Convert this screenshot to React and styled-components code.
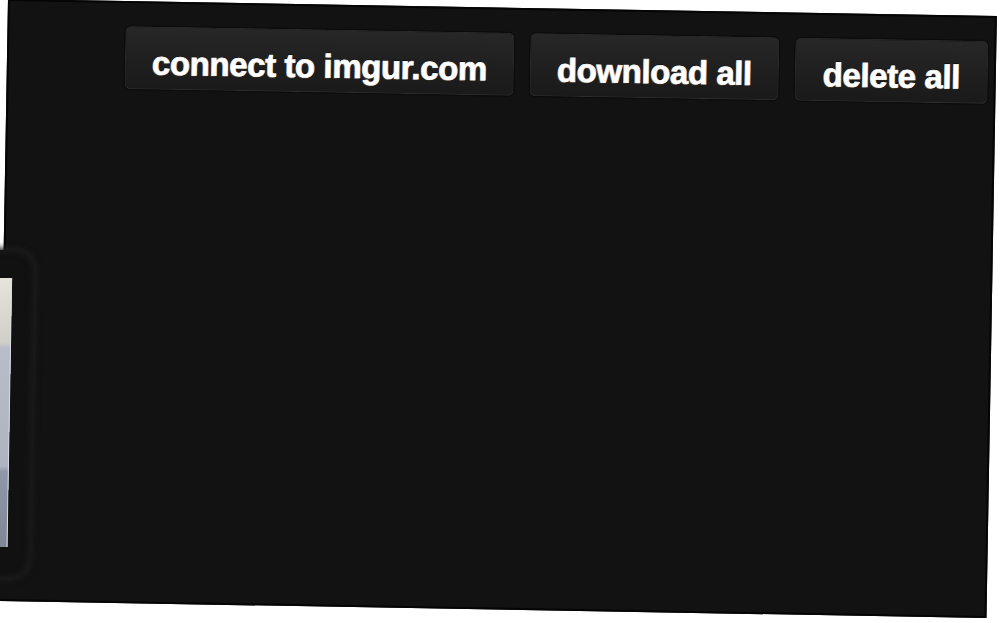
import React from 'react';
import styled, { createGlobalStyle } from 'styled-components';

const Global = createGlobalStyle`
  html, body {
    margin: 0;
    padding: 0;
    background: #ffffff;
    overflow: hidden;
  }
  body {
    width: 1000px;
    height: 623px;
    font-family: "Liberation Sans", Arial, Helvetica, sans-serif;
  }
`;

const Stage = styled.div`
  width: 1000px;
  height: 623px;
  padding: 0 0 0 8px;
  box-sizing: border-box;
`;

const Panel = styled.div`
  width: 989px;
  height: 602px;
  margin-top: -1px;
  box-sizing: border-box;
  padding: 23px 6px 0 0;
  background: #121212;
  border: 2px solid #050505;
  transform: rotate(0.99deg);
  transform-origin: 0 0;
  display: flex;
  flex-direction: column;
`;

const Toolbar = styled.div`
  display: flex;
  justify-content: flex-end;
  gap: 16px;
`;

const Button = styled.button`
  width: ${p => p.w}px;
  height: 63px;
  box-sizing: border-box;
  padding: 10px 0 0;
  margin: 0;
  border: 1px solid #2a2a2a;
  border-bottom-color: #303030;
  border-radius: 6px;
  background: linear-gradient(to bottom, #272727 0%, #1f1f1f 55%, #1a1a1a 100%);
  box-shadow: 0 0 0 1px #0c0c0c;
  color: #ffffff;
  font-family: "Liberation Sans", Arial, Helvetica, sans-serif;
  font-weight: bold;
  font-size: 33px;
  line-height: 33px;
  letter-spacing: -0.4px;
  text-align: center;
  white-space: nowrap;
  -webkit-text-stroke: 0.7px #ffffff;
  text-shadow: 0 -1px 0 #000, 1px 0 0 rgba(120, 160, 255, 0.3), -1px 1px 0 rgba(255, 170, 60, 0.25);
  cursor: pointer;
`;

const Card = styled.div`
  width: 62px;
  height: 328px;
  margin: 163px 0 0 -33px;
  box-sizing: border-box;
  padding: 28px 22px 0 0;
  border-radius: 20px;
  background: #111111;
  box-shadow: 0 0 6px 2px #1e1e1e, inset 0 0 6px 1px #1d1d1d;
  display: flex;
  justify-content: flex-end;
`;

const Thumb = styled.div`
  width: 40px;
  height: 269px;
  background: linear-gradient(
    to bottom,
    #e6e4da 0%,
    #cfcfc8 24%,
    #b9bdc9 26%,
    #aeb3c1 70%,
    #8f97a8 72%,
    #7f8797 100%
  );
  box-shadow: inset -1px 0 0 #d8dbe2;
`;

export default function App() {
  return (
    <>
      <Global />
      <Stage>
        <Panel>
          <Toolbar>
            <Button w={389}>connect to imgur.com</Button>
            <Button w={249}>download all</Button>
            <Button w={193}>delete all</Button>
          </Toolbar>
          <Card>
            <Thumb />
          </Card>
        </Panel>
      </Stage>
    </>
  );
}
